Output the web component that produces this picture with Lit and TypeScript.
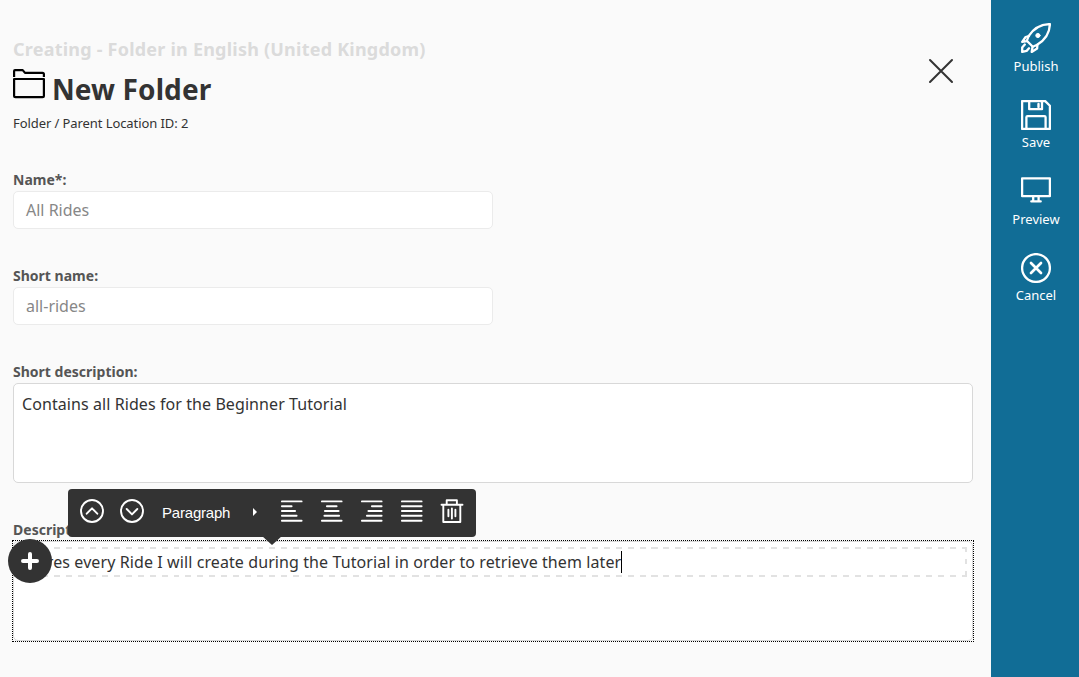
import { LitElement, html, css, svg } from "lit";
import { customElement } from "lit/decorators.js";

const rocket = svg`<path d="M28.900 1.100C20 1.300 13 4.600 7.600 13.200L5.800 17.800L11.800 23.800L16.200 21.800C24.500 16.800 28.700 10 28.900 1.100Z"/><circle cx="16.900" cy="12.500" r="2.100" fill="currentColor" stroke-width="1"/><path d="M8 13L4.600 14L1.200 18.800L6 18.200M16.400 21.700L16.100 25.600L10.700 28.900L11.500 24M3.800 21.500L1.200 24.500V28.900L5.600 27.900L8 25.300"/>`;
const floppy = svg`<path d="M1.100 1.100H24.200L28.900 5.800V28.900H1.100ZM8.200 1.500V9.200H21V1.500M5.400 28.500V17.300Q5.400 16.100 6.600 16.100H23.400Q24.600 16.100 24.600 17.300V28.500"/><path d="M17.500 4V7" stroke-width="2.400"/>`;
const monitor = svg`<path d="M1.100 2.300H28.900V20.100H1.100ZM12.200 20.100V25.200M17.600 20.100V25.200M10.300 25.400H19.700"/>`;
const cancel = svg`<circle cx="15" cy="15" r="13.900"/><path d="M10 10L20 20M20 10L10 20" stroke-width="2.700"/>`;
const ACTIONS = [
  { label: "Publish", icon: rocket },
  { label: "Save", icon: floppy },
  { label: "Preview", icon: monitor },
  { label: "Cancel", icon: cancel },
];
const ALIGNS = [
  [[1, 22], [1, 12], [1, 15.500], [1, 17], [1, 22]],
  [[1, 22], [6, 17], [4, 19], [3.500, 19.500], [1, 22]],
  [[1, 22], [11, 22], [7.500, 22], [6, 22], [1, 22]],
  [[1, 22], [1, 22], [1, 22], [1, 22], [1, 22]],
];

@customElement("action-bar")
class ActionBar extends LitElement {
  static styles = css`
    :host { display: block; width: 88px; background: #116d96; }
    nav { display: flex; flex-direction: column; padding-top: 23.200px; }
    .action { height: 76.400px; display: flex; flex-direction: column; align-items: center; color: #fff; font-size: 13px; line-height: 18px; }
    svg { display: block; width: 30px; height: 30px; margin: 0 0 3.800px 2px; flex: none; fill: none; stroke: currentColor; stroke-width: 2.300; stroke-linecap: round; stroke-linejoin: round; }
    .action:nth-child(n + 2) svg { margin-top: 0.300px; margin-bottom: 3.500px; }
    span { margin-left: 2px; }
  `;
  render() {
    return html`<nav>${ACTIONS.map((a) => html`<div class="action"><svg viewBox="0 0 30 30">${a.icon}</svg><span>${a.label}</span></div>`)}</nav>`;
  }
}

@customElement("block-toolbar")
class BlockToolbar extends LitElement {
  static styles = css`
    :host { display: block; }
    .bar { position: relative; box-sizing: border-box; width: 408px; height: 48px; padding: 0 4px; display: flex; align-items: center; background: #333; border-radius: 4px; color: #fff; }
    .bar::after { content: ""; position: absolute; left: 194px; top: 47px; border: solid transparent; border-width: 9px 10px 0; border-top-color: #333; }
    .btn { width: 40px; height: 48px; display: flex; align-items: center; justify-content: center; }
    svg { display: block; width: 24px; height: 24px; margin: 0 1px 4px 0; fill: none; stroke: currentColor; stroke-width: 1.900; stroke-linecap: round; stroke-linejoin: round; }
    .style { flex: none; width: 120px; box-sizing: border-box; padding: 0 15px 2px 10px; display: flex; align-items: center; justify-content: space-between; font: 15px "Liberation Sans", Arial, sans-serif; letter-spacing: -0.200px; }
    .arrow { width: 0; height: 0; border: solid transparent; border-width: 4px 0 4px 4px; border-left-color: #fff; }
  `;
  render() {
    return html`<div class="bar">
      <div class="btn"><svg viewBox="0 0 24 24"><circle cx="12" cy="12" r="11" /><path d="M6.700 14.700L12 9.300L17.300 14.700" /></svg></div>
      <div class="btn"><svg viewBox="0 0 24 24"><circle cx="12" cy="12" r="11" /><path d="M6.700 10L12 15.400L17.300 10" /></svg></div>
      <div class="style"><span>Paragraph</span><i class="arrow"></i></div>
      ${ALIGNS.map((lines) => html`<div class="btn"><svg viewBox="0 0 24 24">${lines.map(([a, b], i) => svg`<path d="M${a + 0.9} ${[2.4, 7.2, 12, 16.8, 21.8][i]}H${b - 0.4}"/>`)}</svg></div>`)}
      <div class="btn"><svg viewBox="0 0 24 24"><path d="M1.500 5.700H22.500M3.300 6V23H20.300V6M6.700 5.500V1.300H16.900V5.500M8.400 10.800V17.200M11.900 9.500V19.500M15.400 10.800V17.200" /></svg></div>
    </div>`;
  }
}

@customElement("app-root")
class AppRoot extends LitElement {
  static styles = css`
    :host { display: flex; width: 1079px; height: 677px; overflow: hidden; background: #fafafa; color: #333; font-family: "Noto Sans", sans-serif; }
    * { box-sizing: border-box; }
    main { width: 991px; flex: none; padding: 37px 18px 0 13px; }
    header { display: flex; justify-content: space-between; height: 132px; }
    .over { font-size: 18px; font-weight: 700; line-height: 24px; color: #dbdbdb; letter-spacing: 0.220px; }
    .title { display: flex; align-items: flex-start; gap: 7px; height: 53px; padding-top: 8px; }
    h1 { margin: 0; font-size: 28px; line-height: 40px; font-weight: 700; letter-spacing: 0.100px; }
    .folder { width: 32px; height: 30px; fill: none; stroke: #000; stroke-width: 2.200; stroke-linejoin: round; }
    .meta { font-size: 13px; line-height: 19px; letter-spacing: -0.080px; }
    .close { width: 26px; height: 26px; margin: 21px 19px 0 0; stroke: #333; stroke-width: 2; stroke-linecap: round; }
    label { display: block; height: 22px; line-height: 22px; font-size: 14px; font-weight: 700; color: #555; letter-spacing: 0.010px; }
    .field { margin-bottom: 36px; }
    .input { width: 480px; height: 38px; padding: 0 12px; border: 1px solid #ebebeb; border-radius: 5px; background: #fff; color: #878787; font-size: 16px; line-height: 36px; }
    .area { height: 100px; padding: 8px; border: 1px solid #d8d8d8; border-radius: 5px; background: #fff; font-size: 16px; line-height: 24px; letter-spacing: 0.080px; }
    .editor { position: relative; height: 100px; padding: 5px; border: 1px solid #d8d8d8; border-radius: 5px; background: #fff; font-size: 16px; letter-spacing: 0.095px; }
    .outline { position: absolute; inset: -2px; border: 1px dotted #000; pointer-events: none; }
    .block {
      --dash-x: repeating-linear-gradient(90deg, #e2e2e2 0 5.150px, transparent 5.150px 11.100px, #e2e2e2 11.100px 11.950px);
      --dash-y: repeating-linear-gradient(#e2e2e2 0 5.500px, transparent 5.500px 12px);
      display: flex; align-items: center; height: 30px; padding: 0 3.300px; line-height: 24px;
      background: var(--dash-x) top / 100% 2px no-repeat, var(--dash-x) bottom / 100% 2px no-repeat, var(--dash-y) left / 2px 100% no-repeat, var(--dash-y) right / 2px 100% no-repeat;
    }
    .caret { width: 1px; height: 22px; background: #000; }
    .plus { position: absolute; left: -6px; top: -3px; width: 44px; height: 44px; border-radius: 50%; background: #333; display: flex; align-items: center; justify-content: center; }
    .plus svg { width: 18px; height: 18px; stroke: #fff; stroke-width: 4; stroke-linecap: round; }
    block-toolbar { position: absolute; left: 54px; top: -53px; letter-spacing: 0; }
  `;
  render() {
    return html`<main>
      <header>
        <div>
          <div class="over">Creating - Folder in English (United Kingdom)</div>
          <div class="title">
            <svg class="folder" viewBox="0 0 32 30"><path d="M1.100 8V2Q1.100 1.100 2 1.100H9.700L12 3.900H29.500Q30.900 3.900 30.900 5.300V8M1.100 10H30.900V26.800Q30.900 28.200 29.500 28.200H2.500Q1.100 28.200 1.100 26.800Z" /></svg>
            <h1>New Folder</h1>
          </div>
          <div class="meta">Folder / Parent Location ID: 2</div>
        </div>
        <svg class="close" viewBox="0 0 26 26"><path d="M2 2L24 24M24 2L2 24" /></svg>
      </header>
      <div class="field"><label>Name*:</label><div class="input">All Rides</div></div>
      <div class="field"><label>Short name:</label><div class="input">all-rides</div></div>
      <div class="field"><label>Short description:</label><div class="area">Contains all Rides for the Beginner Tutorial</div></div>
      <div class="field"><label>Description:</label>
        <div class="editor">
          <div class="outline"></div>
          <div class="block"><span>Stores every Ride I will create during the Tutorial in order to retrieve them later</span><i class="caret"></i></div>
          <div class="plus"><svg viewBox="0 0 18 18"><path d="M9 2V16M2 9H16" /></svg></div>
          <block-toolbar></block-toolbar>
        </div>
      </div>
    </main>
    <action-bar></action-bar>`;
  }
}
